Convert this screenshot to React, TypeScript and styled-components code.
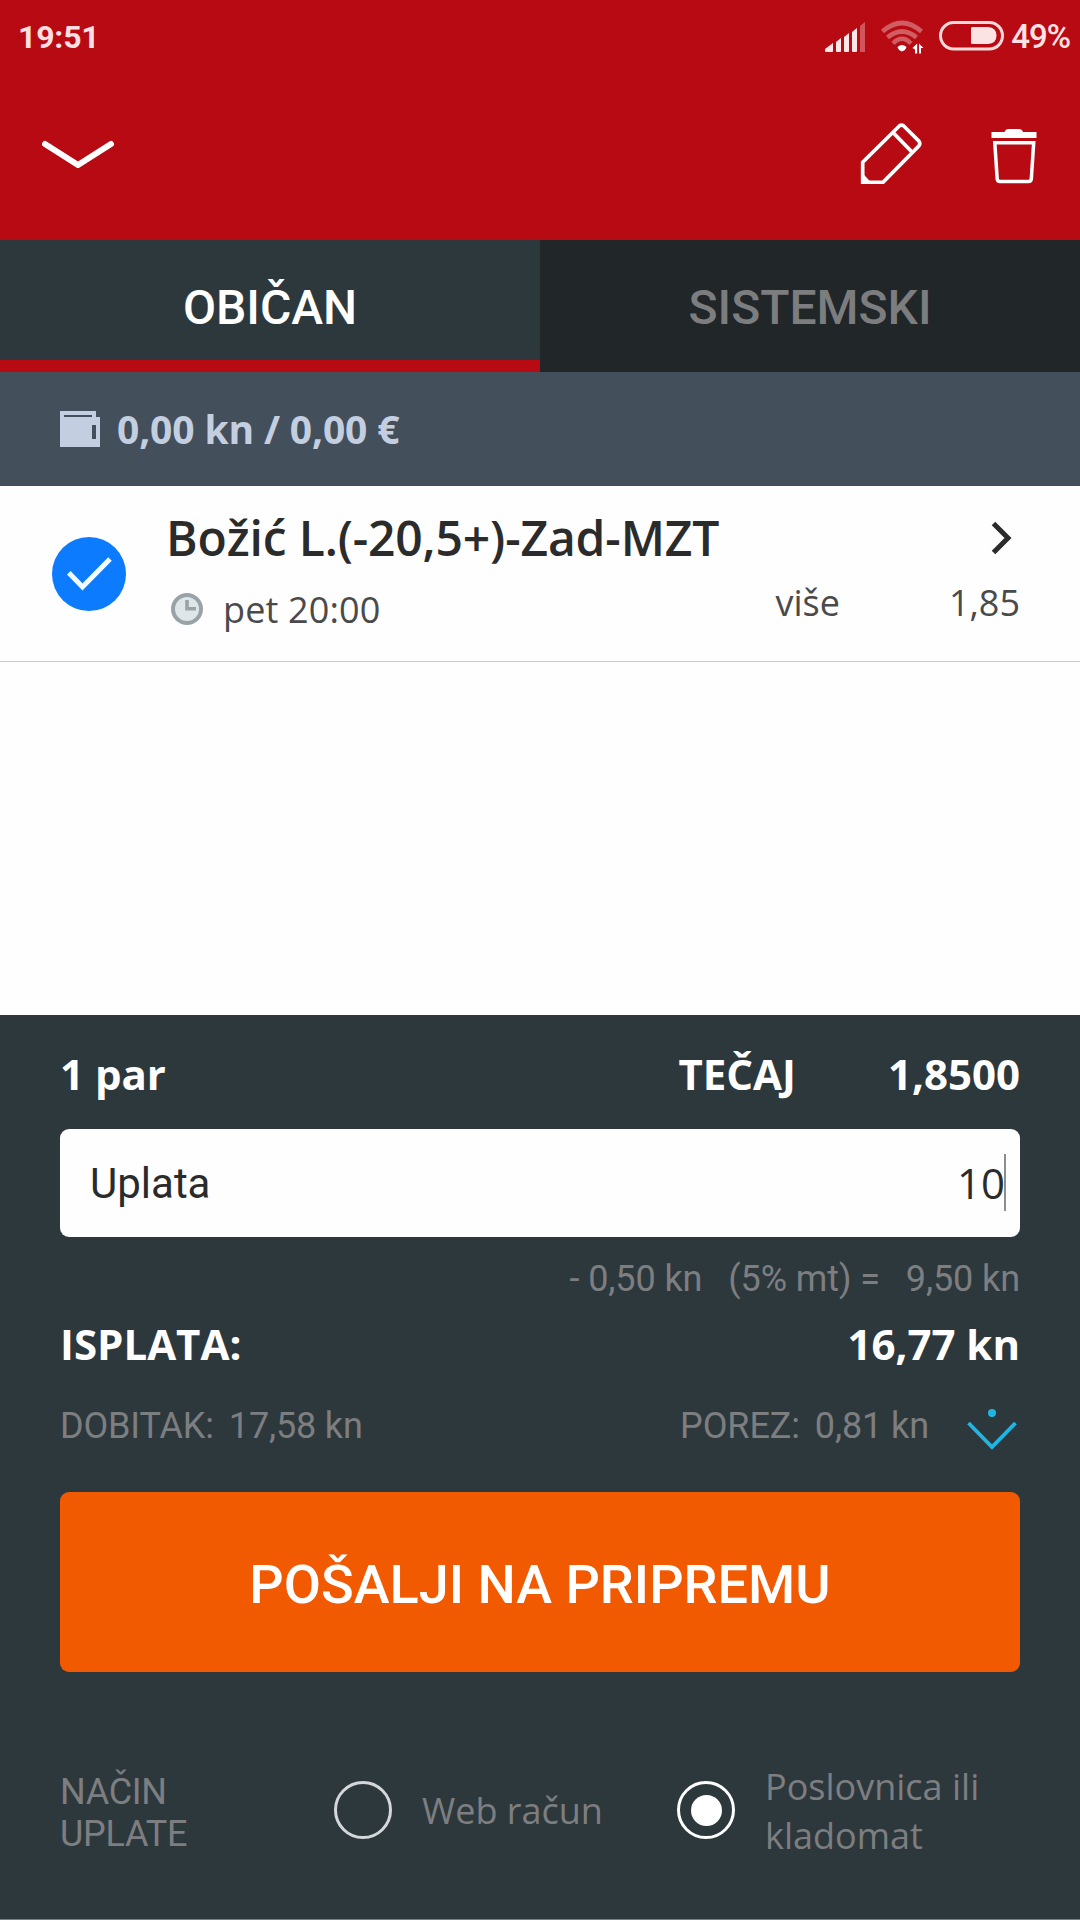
import React, { useState } from "react";
import styled, { createGlobalStyle } from "styled-components";

const openSans = `"Open Sans", "Noto Sans", sans-serif`;
const roboto = `Roboto, "Liberation Sans", sans-serif`;

const GlobalStyle = createGlobalStyle`
  * { box-sizing: border-box; }
  body { margin: 0; background: #fff; }
  button { border: 0; padding: 0; margin: 0; background: none; }
`;

const Screen = styled.div`
  width: 1080px;
  height: 1920px;
  display: flex;
  flex-direction: column;
  overflow: hidden;
  background: #fefefe;
  font-family: ${openSans};
`;

const Text = styled.span<{
  $size: number;
  $line: number;
  $color?: string;
  $weight?: number;
  $roboto?: boolean;
  $track?: number;
}>`
  display: block;
  white-space: pre;
  font-family: ${(p) => (p.$roboto ? roboto : openSans)};
  font-size: ${(p) => p.$size}px;
  line-height: ${(p) => p.$line}px;
  font-weight: ${(p) => p.$weight ?? 400};
  color: ${(p) => p.$color ?? "#7d7e80"};
  letter-spacing: ${(p) => p.$track ?? 0}px;
`;

const Header = styled.header`
  height: 240px;
  background: #b80a12;
  display: flex;
  flex-direction: column;
`;

const StatusBar = styled.div`
  height: 72px;
  padding: 1px 10px 0 18px;
  display: flex;
  align-items: center;
  justify-content: space-between;
`;

const StatusIcons = styled.div`
  display: flex;
  align-items: center;
`;

const SignalSlot = styled.div`
  margin-right: 15px;
`;

const WifiSlot = styled.div`
  margin-right: 15px;
`;

const BatterySlot = styled.div`
  margin-right: 7px;
  padding-bottom: 1px;
`;

const Toolbar = styled.div`
  flex: 1;
  padding: 48px 42px 0 40px;
  display: flex;
  align-items: flex-start;
  justify-content: space-between;
`;

const ToolbarActions = styled.div`
  display: flex;
  gap: 69px;
`;

const IconButton = styled.button<{ $top?: number; $right?: number }>`
  display: flex;
  padding-top: ${(p) => p.$top ?? 0}px;
  padding-right: ${(p) => p.$right ?? 0}px;
`;

const Icon = styled.svg`
  display: block;
  flex: none;
`;

const Tabs = styled.nav`
  height: 132px;
  display: grid;
  grid-template-columns: 1fr 1fr;
`;

const Tab = styled.button<{ $active: boolean }>`
  height: 132px;
  padding-top: 16px;
  background: ${(p) => (p.$active ? "#2d383d" : "#212629")};
  border-bottom: 12px solid ${(p) => (p.$active ? "#b80a12" : "#212629")};
  display: flex;
  align-items: center;
  justify-content: center;
`;

const Balance = styled.div`
  height: 114px;
  padding-left: 60px;
  background: #434f5b;
  display: flex;
  align-items: center;
  gap: 17px;
`;

const Bet = styled.div`
  height: 176px;
  padding-left: 52px;
  padding-right: 60px;
  border-bottom: 1px solid #c8c8c8;
  display: flex;
  align-items: flex-start;
`;

const BetCheck = styled.div`
  padding-top: 51px;
  width: 114px;
`;

const BetBody = styled.div`
  flex: 1;
  display: flex;
  flex-direction: column;
`;

const BetTitle = styled.div`
  padding: 18px 7px 0 0;
  display: flex;
  align-items: center;
  justify-content: space-between;
`;

const BetInfo = styled.div`
  padding: 7px 0 0 5px;
  display: grid;
  grid-template-columns: 32px 1fr 66px 180px;
  align-items: start;
`;

const Clock = styled.div`
  padding-top: 15px;
`;

const Time = styled.div`
  padding: 7px 0 0 20px;
`;

const RightAligned = styled.div`
  display: flex;
  justify-content: flex-end;
`;

const Filler = styled.div`
  flex: 1;
`;

const Slip = styled.section`
  height: 905px;
  padding: 32px 60px 0;
  background: #2d383d;
  border-bottom: 1px solid #7c8284;
  display: flex;
  flex-direction: column;
`;

const Row = styled.div<{ $height: number }>`
  height: ${(p) => p.$height}px;
  display: flex;
  align-items: flex-start;
  justify-content: space-between;
`;

const Group = styled.div<{ $gap: number }>`
  display: flex;
  align-items: flex-start;
  gap: ${(p) => p.$gap}px;
`;

const StakeField = styled.label`
  height: 108px;
  padding: 0 14px 0 30px;
  border-radius: 9px;
  background: #fefefe;
  display: flex;
  align-items: center;
  justify-content: space-between;
`;

const StakeValue = styled.div`
  display: flex;
  align-items: center;
  padding-bottom: 1px;
`;

const StakeName = styled.div`
  padding-top: 2px;
`;

const Caret = styled.i`
  width: 2px;
  height: 57px;
  margin-left: -1px;
  background: #8d8d8d;
`;

const Fee = styled.div`
  height: 86px;
  padding-top: 21px;
  display: flex;
  justify-content: flex-end;
`;

const Submit = styled.button`
  height: 180px;
  border-radius: 9px;
  background: #f25a02;
  display: flex;
  align-items: center;
  justify-content: center;
  padding-top: 5px;
`;

const Payment = styled.div`
  padding-top: 89px;
  display: flex;
  align-items: flex-start;
`;

const PaymentLabel = styled.div`
  width: 274px;
  padding-top: 10px;
`;

const Option = styled.div<{ $width: number }>`
  width: ${(p) => p.$width}px;
  height: 98px;
  display: flex;
  align-items: center;
  gap: 30px;
`;

const TwoLineLabel = styled.div`
  padding-top: 2px;
`;

const Radio = styled.button<{ $on: boolean }>`
  width: 58px;
  height: 58px;
  flex: none;
  border-radius: 50%;
  border: 3px solid ${(p) => (p.$on ? "#fff" : "#d5d7da")};
  display: flex;
  align-items: center;
  justify-content: center;

  &::after {
    content: "";
    width: 31px;
    height: 31px;
    border-radius: 50%;
    background: ${(p) => (p.$on ? "#fff" : "transparent")};
  }
`;

const Signal = () => (
  <Icon width="41" height="30" viewBox="0 0 41 30" fill="#fde6e7">
    <path d="M0 29V27L8 21V29Q8 30 7 30H1Q0 30 0 29Z" />
    <path d="M11 20L16 16V29Q16 30 15 30H12Q11 30 11 29Z" />
    <path d="M19 15L24 11V29Q24 30 23 30H20Q19 30 19 29Z" />
    <path d="M27 10L32 6V29Q32 30 31 30H28Q27 30 27 29Z" />
    <path d="M35 4L40 0V30H35Z" opacity="0.35" />
  </Icon>
);

const Wifi = () => (
  <Icon width="43" height="34" viewBox="0 0 43 34" fill="none">
    <g stroke="#fff" strokeOpacity="0.34" strokeWidth="4.6">
      <path d="M1.5 11.5Q21 -5.5 40.5 11.5" />
      <path d="M6.5 17.5Q21 5.5 35.5 17.5" />
      <path d="M12 23.5Q21 14 30 23.5" />
    </g>
    <path d="M16.5 27Q21 23 25.5 27Q24.5 30.5 21 31.5Q17.5 30.5 16.5 27Z" fill="#fff" />
    <path d="M36.200 23.500V33.500H34V29.500L31.500 28Z M38 23.500V33.500H40V28H42.500Z" fill="#fff" />
  </Icon>
);

const Battery = () => (
  <Icon width="65" height="30" viewBox="0 0 65 30" fill="none">
    <rect x="1.500" y="1.500" width="62" height="26.500" rx="13.250" stroke="#fbd9db" strokeWidth="3" />
    <path d="M32 7.500Q32 6 33.500 6H49Q57.500 6.500 57.500 14.500Q57.500 22.500 49 23H33.500Q32 23 32 21.500Z" fill="#fbe3e4" />
  </Icon>
);

const ChevronDown = () => (
  <Icon width="76" height="34" viewBox="0 0 76 34" fill="none">
    <path d="M5 4L38 25L71 4" stroke="#fff" strokeWidth="6" strokeLinecap="round" strokeLinejoin="round" />
  </Icon>
);

const Pencil = () => (
  <Icon width="64" height="64" viewBox="0 0 64 64" fill="none" stroke="#fff" strokeWidth="3.700">
    <path d="M4.700 62.300V42.300L41.500 5.800Q43.500 4.300 45.500 5.800L61 21.300Q62.600 23.500 61 25.700L25 62.300Z" />
    <path d="M35.500 13L53.500 31.500" />
    <path d="M3.500 52L14 63.500H3.500Z" fill="#fff" stroke="none" />
  </Icon>
);

const Trash = () => (
  <Icon width="47" height="64" viewBox="0 0 47 64" fill="none">
    <path d="M0.500 12H13.500Q14.500 9 17.500 9H28Q31 9 32 12H45.500V18H0.500Z" fill="#fff" />
    <path d="M3.800 22.700H42.700L40.300 59Q40 61.500 37.500 61.500H9Q6.500 61.500 6.200 59Z" stroke="#fff" strokeWidth="3.500" />
  </Icon>
);

const Wallet = () => (
  <Icon width="40" height="36" viewBox="0 0 40 36">
    <path
      fillRule="evenodd"
      fill="#c3cfe0"
      d="M0 0H36V6H40V36H0Z M4 4V6H32V4Z M32 14V28H36V14Z"
    />
  </Icon>
);

const Selected = () => (
  <Icon width="74" height="74" viewBox="0 0 74 74" fill="none">
    <circle cx="37" cy="37" r="37" fill="#0d7bfd" />
    <path d="M16.800 35.800L30.500 50L58 22" stroke="#f4fcff" strokeWidth="5" />
  </Icon>
);

const ClockIcon = () => (
  <Icon width="32" height="32" viewBox="0 0 32 32" fill="none">
    <circle cx="16" cy="16" r="14" fill="#dfe6e9" stroke="#99a3a7" strokeWidth="4" />
    <path d="M16 7V15.800H25" stroke="#99a3a7" strokeWidth="3.600" />
  </Icon>
);

const ChevronRight = () => (
  <Icon width="24" height="34" viewBox="0 0 24 34" fill="none">
    <path d="M4.500 2.500L19 17L4.500 31.500" stroke="#2b2b2b" strokeWidth="5" />
  </Icon>
);

const Expand = () => (
  <Icon width="50" height="42" viewBox="0 0 50 42" fill="none">
    <circle cx="25" cy="4" r="4" fill="#1fb6e4" />
    <path d="M1.500 14L25 38L48.500 14" stroke="#1fb6e4" strokeWidth="3.800" />
  </Icon>
);

export default function App() {
  const [system, setSystem] = useState(false);
  const [web, setWeb] = useState(false);

  return (
    <>
      <GlobalStyle />
      <Screen>
        <Header>
          <StatusBar>
            <Text $roboto $size={32} $line={40} $weight={700} $color="#ffdfe1" $track={-0.2}>19:51</Text>
            <StatusIcons>
              <SignalSlot><Signal /></SignalSlot>
              <WifiSlot><Wifi /></WifiSlot>
              <BatterySlot><Battery /></BatterySlot>
              <Text $roboto $size={33} $line={40} $weight={500} $color="#ffe3e4" $track={-1}>49%</Text>
            </StatusIcons>
          </StatusBar>
          <Toolbar>
            <IconButton aria-label="Zatvori" $top={20}><ChevronDown /></IconButton>
            <ToolbarActions>
              <IconButton aria-label="Uredi"><Pencil /></IconButton>
              <IconButton aria-label="Obriši"><Trash /></IconButton>
            </ToolbarActions>
          </Toolbar>
        </Header>

        <Tabs>
          <Tab $active={!system} onClick={() => setSystem(false)}>
            <Text $roboto $size={48} $line={56} $weight={500} $color="#fff">OBIČAN</Text>
          </Tab>
          <Tab $active={system} onClick={() => setSystem(true)}>
            <Text $roboto $size={48} $line={56} $weight={500} $color="#7c7d7f">SISTEMSKI</Text>
          </Tab>
        </Tabs>

        <Balance>
          <Wallet />
          <Text $size={39} $line={56} $weight={700} $color="#c3cfe0" $track={-0.15}>0,00 kn / 0,00 €</Text>
        </Balance>

        <Bet>
          <BetCheck><Selected /></BetCheck>
          <BetBody>
            <BetTitle>
              <Text $size={48} $line={67} $weight={600} $color="#2b2b2b" $track={-0.15}>Božić L.(-20,5+)-Zad-MZT</Text>
              <ChevronRight />
            </BetTitle>
            <BetInfo>
              <Clock><ClockIcon /></Clock>
              <Time><Text $size={36} $line={49} $color="#4a4a4a" $track={0.15}>pet 20:00</Text></Time>
              <RightAligned><Text $size={36} $line={49} $color="#4a4a4a">više</Text></RightAligned>
              <RightAligned><Text $size={36} $line={49} $color="#4a4a4a">1,85</Text></RightAligned>
            </BetInfo>
          </BetBody>
        </Bet>

        <Filler />

        <Slip>
          <Row $height={82}>
            <Text $size={42} $line={54} $weight={700} $color="#fff">1 par</Text>
            <Group $gap={92}>
              <Text $size={42} $line={54} $weight={700} $color="#fff">TEČAJ</Text>
              <Text $size={42} $line={54} $weight={700} $color="#fff">1,8500</Text>
            </Group>
          </Row>

          <StakeField>
            <StakeName>
              <Text $roboto $size={42} $line={54} $color="#2b2b2b">Uplata</Text>
            </StakeName>
            <StakeValue>
              <Text $size={42} $line={54} $color="#2b2b2b">10</Text>
              <Caret />
            </StakeValue>
          </StakeField>

          <Fee>
            <Group $gap={26}>
              <Text $roboto $size={36} $line={42} $track={-0.1}>- 0,50 kn</Text>
              <Text $roboto $size={36} $line={42} $track={-0.1}>(5% mt) =</Text>
              <Text $roboto $size={36} $line={42} $track={-0.1}>9,50 kn</Text>
            </Group>
          </Fee>

          <Row $height={82}>
            <Text $size={42} $line={42} $weight={700} $color="#fff">ISPLATA:</Text>
            <Text $size={42} $line={42} $weight={700} $color="#fff">16,77 kn</Text>
          </Row>

          <Row $height={87}>
            <Group $gap={15}>
              <Text $roboto $size={36} $line={42} $track={-0.15}>DOBITAK:</Text>
              <Text $roboto $size={36} $line={42} $track={-0.15}>17,58 kn</Text>
            </Group>
            <Group $gap={38}>
              <Group $gap={15}>
                <Text $roboto $size={36} $line={42} $track={-0.1}>POREZ:</Text>
                <Text $roboto $size={36} $line={42} $track={-0.1}>0,81 kn</Text>
              </Group>
              <IconButton aria-label="Detalji" $top={4} $right={3}><Expand /></IconButton>
            </Group>
          </Row>

          <Submit>
            <Text $roboto $size={54} $line={64} $weight={500} $color="#fff">POŠALJI NA PRIPREMU</Text>
          </Submit>

          <Payment>
            <PaymentLabel>
              <Text $roboto $size={36} $line={42} $track={-0.3}>{"NAČIN\nUPLATE"}</Text>
            </PaymentLabel>
            <Option $width={343}>
              <Radio $on={web} aria-label="Web račun" onClick={() => setWeb(true)} />
              <Text $size={36} $line={49}>Web račun</Text>
            </Option>
            <Option $width={330}>
              <Radio $on={!web} aria-label="Poslovnica ili kladomat" onClick={() => setWeb(false)} />
              <TwoLineLabel>
                <Text $size={36} $line={49}>{"Poslovnica ili\nkladomat"}</Text>
              </TwoLineLabel>
            </Option>
          </Payment>
        </Slip>
      </Screen>
    </>
  );
}
